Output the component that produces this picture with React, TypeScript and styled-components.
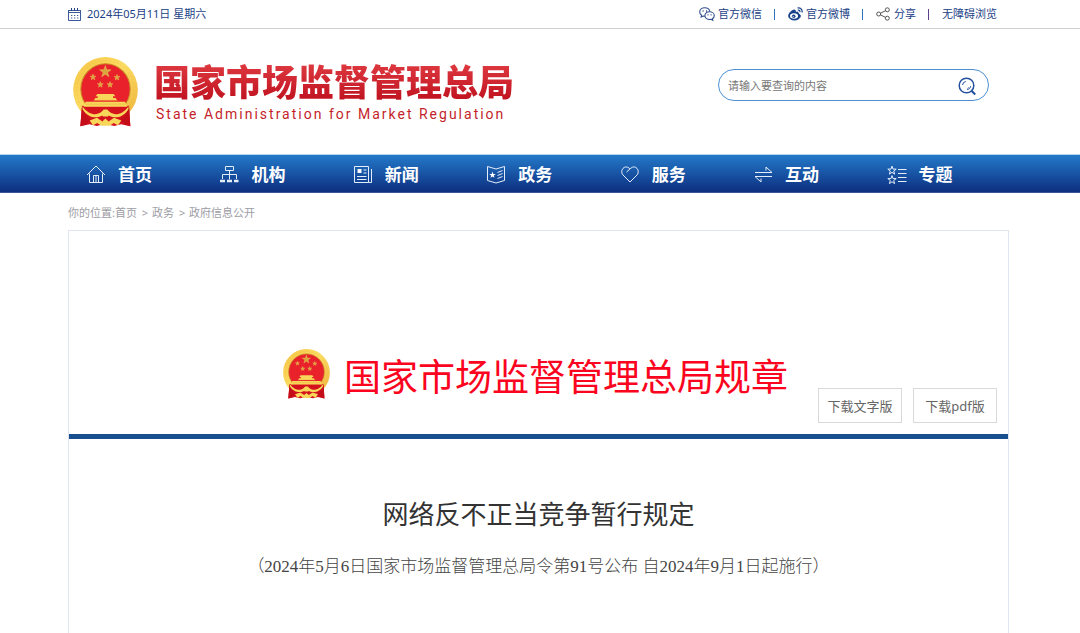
import React from 'react';
import styled, { createGlobalStyle } from 'styled-components';

const sans = `"Noto Sans", "Noto Sans CJK SC", sans-serif`;

const GlobalStyle = createGlobalStyle`
  * { box-sizing: border-box; }
  body { margin: 0; background: #fff; font-family: ${sans}; color: #333; }
  a { color: inherit; text-decoration: none; }
  ul, ol { list-style: none; margin: 0; padding: 0; }
  h1, h2, p { margin: 0; font-weight: 400; }
`;

const Page = styled.div`
  min-height: 100vh;
  display: flex;
  flex-direction: column;
`;

const gutters = `padding-left: 68px; padding-right: 71px;`;

const TopBar = styled.div`
  ${gutters}
  height: 29px;
  border-bottom: 1px solid #d2d2d2;
  display: flex;
  align-items: center;
  justify-content: space-between;
  font-size: 11px;
  line-height: 16px;
  color: #1c3f86;
`;

const DateText = styled.time`
  display: flex;
  align-items: center;
  gap: 6px;
`;

const QuickLinks = styled.ul`
  display: flex;
  align-items: center;
  padding-right: 12px;
`;

const QuickItem = styled.li<{ $divider?: string }>`
  display: flex;
  align-items: center;
  &:not(:last-child)::after {
    content: '';
    width: 1px;
    height: 11px;
    margin: 0 13px 0 12px;
    background: ${(p) => p.$divider ?? '#2f74bd'};
  }
`;

const QuickLink = styled.a`
  display: flex;
  align-items: center;
  gap: 3px;
`;

const Header = styled.header`
  ${gutters}
  height: 125px;
  display: flex;
  align-items: flex-start;
  justify-content: space-between;
`;

const Logo = styled.a`
  display: flex;
  gap: 16px;
  padding: 28px 0 0 5px;
`;

const LogoText = styled.span`
  display: flex;
  flex-direction: column;
  padding-top: 5px;
`;

const LogoName = styled.span`
  font-size: 36px;
  font-weight: 900;
  line-height: 42px;
  color: transparent;
  background: linear-gradient(#df3a42, #bd0f1c);
  background-clip: text;
  -webkit-background-clip: text;
`;

const LogoEnglish = styled.span`
  padding-left: 2px;
  font-family: Roboto, "Liberation Sans", sans-serif;
  font-size: 14px;
  line-height: 20px;
  letter-spacing: 2px;
  color: #c41f2a;
`;

const Search = styled.form`
  display: flex;
  align-items: center;
  width: 271px;
  height: 32px;
  margin: 40px 20px 0 0;
  padding: 2px 11px 0 9px;
  border: 1px solid #4c90d2;
  border-radius: 16px;
`;

const SearchInput = styled.input`
  flex: 1;
  min-width: 0;
  border: 0;
  padding: 0;
  outline: none;
  background: none;
  font: 11px/16px ${sans};
  color: #333;
  &::placeholder { color: #777; opacity: 1; }
`;

const SearchButton = styled.button`
  display: flex;
  border: 0;
  padding: 0;
  background: none;
  cursor: pointer;
`;

const NavBar = styled.nav`
  ${gutters}
  height: 39px;
  border-top: 1px solid #b9d7ee;
  border-bottom: 1px solid #3b5596;
  background: linear-gradient(#2479c9, #0d2f80);
`;

const NavList = styled.ul`
  display: flex;
  height: 100%;
  padding-right: 7px;
`;

const NavItem = styled.li`
  flex: 1;
  display: flex;
`;

const NavLink = styled.a`
  display: flex;
  align-items: center;
  gap: 12px;
  padding: 3px 0 0 18px;
  font-size: 17px;
  line-height: 24px;
  font-weight: 700;
  color: #fff;
  white-space: nowrap;
`;

const Breadcrumb = styled.nav`
  ${gutters}
  padding-top: 12px;
  padding-bottom: 9px;
  font-size: 11px;
  line-height: 16px;
  color: #9c9ca4;
`;

const Separator = styled.span`
  margin: 0 1px 0 2px;
`;

const Main = styled.main`
  ${gutters}
  flex: 1;
  display: flex;
`;

const Panel = styled.div`
  flex: 1;
  border: 1px solid #dfe4f0;
  border-bottom: 0;
`;

const Banner = styled.div`
  display: grid;
  grid-template-columns: 1fr auto 1fr;
  min-height: 208px;
  padding: 118px 11px 11px 11px;
  border-bottom: 5px solid #18508f;
`;

const BannerTitle = styled.div`
  grid-column: 2;
  display: flex;
  align-items: flex-start;
  gap: 14px;
  padding-right: 6px;
`;

const BannerHeading = styled.h2`
  font-size: 37px;
  line-height: 56px;
  color: #fb0420;
  white-space: nowrap;
`;

const Downloads = styled.div`
  display: flex;
  justify-content: flex-end;
  align-items: flex-end;
  gap: 11px;
`;

const DownloadButton = styled.button`
  width: 84px;
  height: 35px;
  padding: 0;
  border: 1px solid #d9d9d9;
  background: #fff;
  font: 13px/20px ${sans};
  color: #666;
  white-space: nowrap;
  cursor: pointer;
`;

const Article = styled.article`
  padding: 57px 16px 40px;
  text-align: center;
`;

const ArticleTitle = styled.h1`
  font-size: 26px;
  line-height: 36px;
  color: #333;
`;

const Promulgation = styled.p`
  margin-top: 22px;
  font-family: "Liberation Serif", "Noto Sans CJK SC", serif;
  font-size: 17px;
  line-height: 26px;
  font-weight: 300;
  color: #444;
`;

const starPoints = (cx: number, cy: number, r: number) =>
  Array.from({ length: 10 }, (_, i) => {
    const a = (Math.PI / 5) * i - Math.PI / 2;
    const d = i % 2 ? r * 0.4 : r;
    return `${(cx + d * Math.cos(a)).toFixed(1)},${(cy + d * Math.sin(a)).toFixed(1)}`;
  }).join(' ');

const Emblem = ({ width, height, id }: { width: number; height: number; id: string }) => (
  <svg width={width} height={height} viewBox="0 0 195 205" preserveAspectRatio="none" aria-hidden="true">
    <defs>
      <linearGradient id={id} x1="0" y1="0" x2="1" y2="1">
        <stop offset="0" stopColor="#f5c242" />
        <stop offset=".45" stopColor="#fbdc62" />
        <stop offset="1" stopColor="#eeb03a" />
      </linearGradient>
    </defs>
    <circle cx="97.5" cy="97" r="97" fill={`url(#${id})`} />
    <circle cx="97.5" cy="97" r="86" fill="none" stroke="#e0a02c" strokeWidth="2" strokeDasharray="5 6" opacity=".35" />
    <circle cx="97.5" cy="94" r="74" fill="#e8212b" stroke="#c98a26" strokeWidth="3" />
    <path d="M27 143 Q97 152 168 143 L172 203 L144 197 L124 202 L97 196 L71 202 L50 197 L22 203 Z" fill="#d3121d" />
    <path d="M27 143 L22 203 L40 198 L52 184 L34 164 Z M168 143 L172 203 L156 198 L143 184 L161 164 Z" fill="#c40d19" />
    <g fill="#f8d65a">
      <g fill="#d9a53d" stroke="#efc35a" strokeWidth="1.5">
        <polygon points={starPoints(97, 43, 18)} />
        <polygon points={starPoints(60, 59, 9)} />
        <polygon points={starPoints(132, 60, 9)} />
        <polygon points={starPoints(82, 81, 9)} />
        <polygon points={starPoints(111, 81, 9)} />
      </g>
      <path d="M73 108 H122 L127 115 H68 Z M74 115 H120 V120 H128 L132 127 H63 L67 120 H74 Z" />
      <path d="M38 131 H156 L163 146 H32 Z" />
      <path d="M28 144 C48 171 70 171 84 162 Q97 149 111 162 C125 171 147 171 167 144 L166 154 C148 181 124 179 110 173 Q97 167 85 173 C71 179 47 181 29 154 Z" />
      <path d="M84 163 L92 154 H103 L111 163 L105 174 H90 Z" />
      <path d="M50 186 L72 178 L88 189 L97 180 L107 189 L123 178 L145 186 L135 200 L122 193 L110 201 H85 L73 193 L60 200 Z" />
    </g>
    <path d="M62 127 H134 M38 138 H156" stroke="#e9aa35" strokeWidth="1.5" />
  </svg>
);

const CalendarIcon = () => (
  <svg width="13" height="13" viewBox="0 0 13 13" fill="none" stroke="#3c5b98">
    <path d="M.5 2v10.500h12V2M.5 4.500h12M.5 2.500h12" />
    <path d="M3.500 0v3M6.500 0v3M9.500 0v3" stroke="#24427f" />
    <path d="M3 7.500h8M3 10h8" strokeDasharray="1.300 1.700" />
  </svg>
);

const WechatIcon = () => (
  <svg width="16" height="14" viewBox="0 0 16 14" fill="none" stroke="#2d4d8e" strokeWidth="1.100">
    <path d="M10.800 4.500C10.300 2.100 8.200.8 5.800.8 3 .8.7 2.600.7 5c0 1.400.7 2.500 1.900 3.300L2.200 10l2-1 1.700.3" />
    <path d="M10.500 4.800c-2.600 0-4.600 1.600-4.600 3.800s2 3.900 4.600 3.900l1.500-.2 1.800 1-.4-1.500c1.200-.8 1.900-1.900 1.900-3.200 0-2.200-2.200-3.800-4.800-3.800Z" fill="#fff" />
    <path d="M3.600 4h1M7 4h1M8.500 7.800h1M11.600 7.800h1" strokeWidth="1.300" />
  </svg>
);

const WeiboIcon = () => (
  <svg width="15" height="14" viewBox="0 0 15 14" fill="none" stroke="#17408b">
    <path d="M6.200 3C3.500 3.300.7 6.300.7 8.800c0 2.600 2.600 4.200 5.600 4.200 3.600 0 6-2 6-4 0-1.300-1-1.900-2-2.200.5-1.600-1-2.100-3.100-1.300C7.800 3.700 7.200 2.900 6.200 3Z" fill="#17408b" />
    <ellipse cx="6" cy="9" rx="4" ry="2.700" fill="#fff" stroke="none" />
    <circle cx="5.700" cy="9.200" r="1.800" fill="#17408b" stroke="none" />
    <circle cx="5.200" cy="9.600" r=".6" fill="#fff" stroke="none" />
    <path d="M9.500 1c2.800-.7 5.200 1.500 4.500 4.500M9.800 3.200c1.400-.3 2.400.6 2.100 2" strokeWidth="1.200" />
  </svg>
);

const ShareIcon = () => (
  <svg width="15" height="14" viewBox="0 0 15 14" fill="none" stroke="#555">
    <circle cx="2.700" cy="7" r="2" />
    <circle cx="11.300" cy="2.800" r="2" />
    <circle cx="11.300" cy="11.200" r="2" />
    <path d="M4.600 6.200l4.900-2.500M4.600 7.900l4.900 2.500" />
  </svg>
);

const SearchIcon = () => (
  <svg width="19" height="19" viewBox="0 0 19 19" fill="none" stroke="#24509f">
    <circle cx="8.500" cy="8.500" r="7.300" strokeWidth="1.500" />
    <path d="M13.200 13.500l4 4" strokeWidth="2" />
    <path d="M4.500 8a4 4 0 0 1 3.300-3.500M12.700 9.200a4.200 4.200 0 0 1-3.500 3.500M10.500 10.500l-1 1" strokeWidth="1" />
  </svg>
);

const navIcons: Record<string, React.ReactNode> = {
  home: <path d="M1 10 10 1l9 9M3.500 8.500v9h13v-9M7.500 17.500v-7h5v7M10 10.500v7" />,
  org: (
    <>
      <path d="M6.500 1.500h8v4h-8zM10.500 5.500v9M3.500 14V9.500h14V14" />
      <path d="M1 16h5M8 16h5M15 16h4.500" strokeWidth="2.500" />
    </>
  ),
  news: (
    <>
      <path d="M1.500 1.500h14v16h-14zM15.500 17.500h3V4M10.500 5h3M10.500 8h3M4 11.500h9.500M4 14.500h9.500" />
      <path d="M4.500 4h4v4h-4z" fill="#fff" stroke="none" />
    </>
  ),
  affairs: (
    <>
      <path d="M1.500 1.500 10 4l8.500-2.500V15.500L10 18 1.500 15.500ZM11.500 7.500l5-2M11.500 10.500l5-2M11.500 13.500l5-2" />
      <polygon points={starPoints(6.5, 10, 3.4)} fill="#fff" stroke="none" />
    </>
  ),
  service: <path d="M10 17 2.800 9.800C-.5 5.500 4.500-.8 9.300 3.200L10 4l.8-.8c4.700-4 9.700 2.300 6.400 6.600ZM10 4 6.500 7" />,
  exchange: <path d="M2 7.500h17L13 2v3.500M19 11.500H2L8 17v-3.500" />,
  topics: (
    <>
      <path d="M11 4.500h8.500M11 8.500h8.500M11 12.500h8.500M11 16.500h8.500" />
      <polygon points={starPoints(5, 5.5, 4.4)} />
      <polygon points={starPoints(5, 15, 4.4)} />
    </>
  ),
};

const NavIcon = ({ name }: { name: string }) => (
  <svg width="20" height="20" viewBox="0 0 20 20" fill="none" stroke="#e4eefa" aria-hidden="true">
    {navIcons[name]}
  </svg>
);

const navItems = [
  ['home', '首页'],
  ['org', '机构'],
  ['news', '新闻'],
  ['affairs', '政务'],
  ['service', '服务'],
  ['exchange', '互动'],
  ['topics', '专题'],
];

export default function App() {
  return (
    <Page>
      <GlobalStyle />
      <TopBar>
        <DateText dateTime="2024-05-11">
          <CalendarIcon />
          2024年05月11日 星期六
        </DateText>
        <QuickLinks>
          <QuickItem><QuickLink href="#wechat"><WechatIcon />官方微信</QuickLink></QuickItem>
          <QuickItem><QuickLink href="#weibo"><WeiboIcon />官方微博</QuickLink></QuickItem>
          <QuickItem $divider="#5c3f8e"><QuickLink href="#share"><ShareIcon />分享</QuickLink></QuickItem>
          <QuickItem><QuickLink href="#accessible">无障碍浏览</QuickLink></QuickItem>
        </QuickLinks>
      </TopBar>
      <Header>
        <Logo href="#home">
          <Emblem width={65} height={70} id="gold-logo" />
          <LogoText>
            <LogoName>国家市场监督管理总局</LogoName>
            <LogoEnglish>State Administration for Market Regulation</LogoEnglish>
          </LogoText>
        </Logo>
        <Search role="search" onSubmit={(e) => e.preventDefault()}>
          <SearchInput type="text" aria-label="搜索" placeholder="请输入要查询的内容" />
          <SearchButton type="submit" aria-label="搜索"><SearchIcon /></SearchButton>
        </Search>
      </Header>
      <NavBar>
        <NavList>
          {navItems.map(([icon, label]) => (
            <NavItem key={icon}>
              <NavLink href={`#${icon}`}><NavIcon name={icon} />{label}</NavLink>
            </NavItem>
          ))}
        </NavList>
      </NavBar>
      <Breadcrumb>
        你的位置:<a href="#home">首页</a> <Separator>&gt;</Separator> <a href="#affairs">政务</a> <Separator>&gt;</Separator> <a href="#info">政府信息公开</a>
      </Breadcrumb>
      <Main>
        <Panel>
          <Banner>
            <BannerTitle>
              <Emblem width={47} height={50} id="gold-banner" />
              <BannerHeading>国家市场监督管理总局规章</BannerHeading>
            </BannerTitle>
            <Downloads>
              <DownloadButton type="button">下载文字版</DownloadButton>
              <DownloadButton type="button">下载pdf版</DownloadButton>
            </Downloads>
          </Banner>
          <Article>
            <ArticleTitle>网络反不正当竞争暂行规定</ArticleTitle>
            <Promulgation>（2024年5月6日国家市场监督管理总局令第91号公布 自2024年9月1日起施行）</Promulgation>
          </Article>
        </Panel>
      </Main>
    </Page>
  );
}
